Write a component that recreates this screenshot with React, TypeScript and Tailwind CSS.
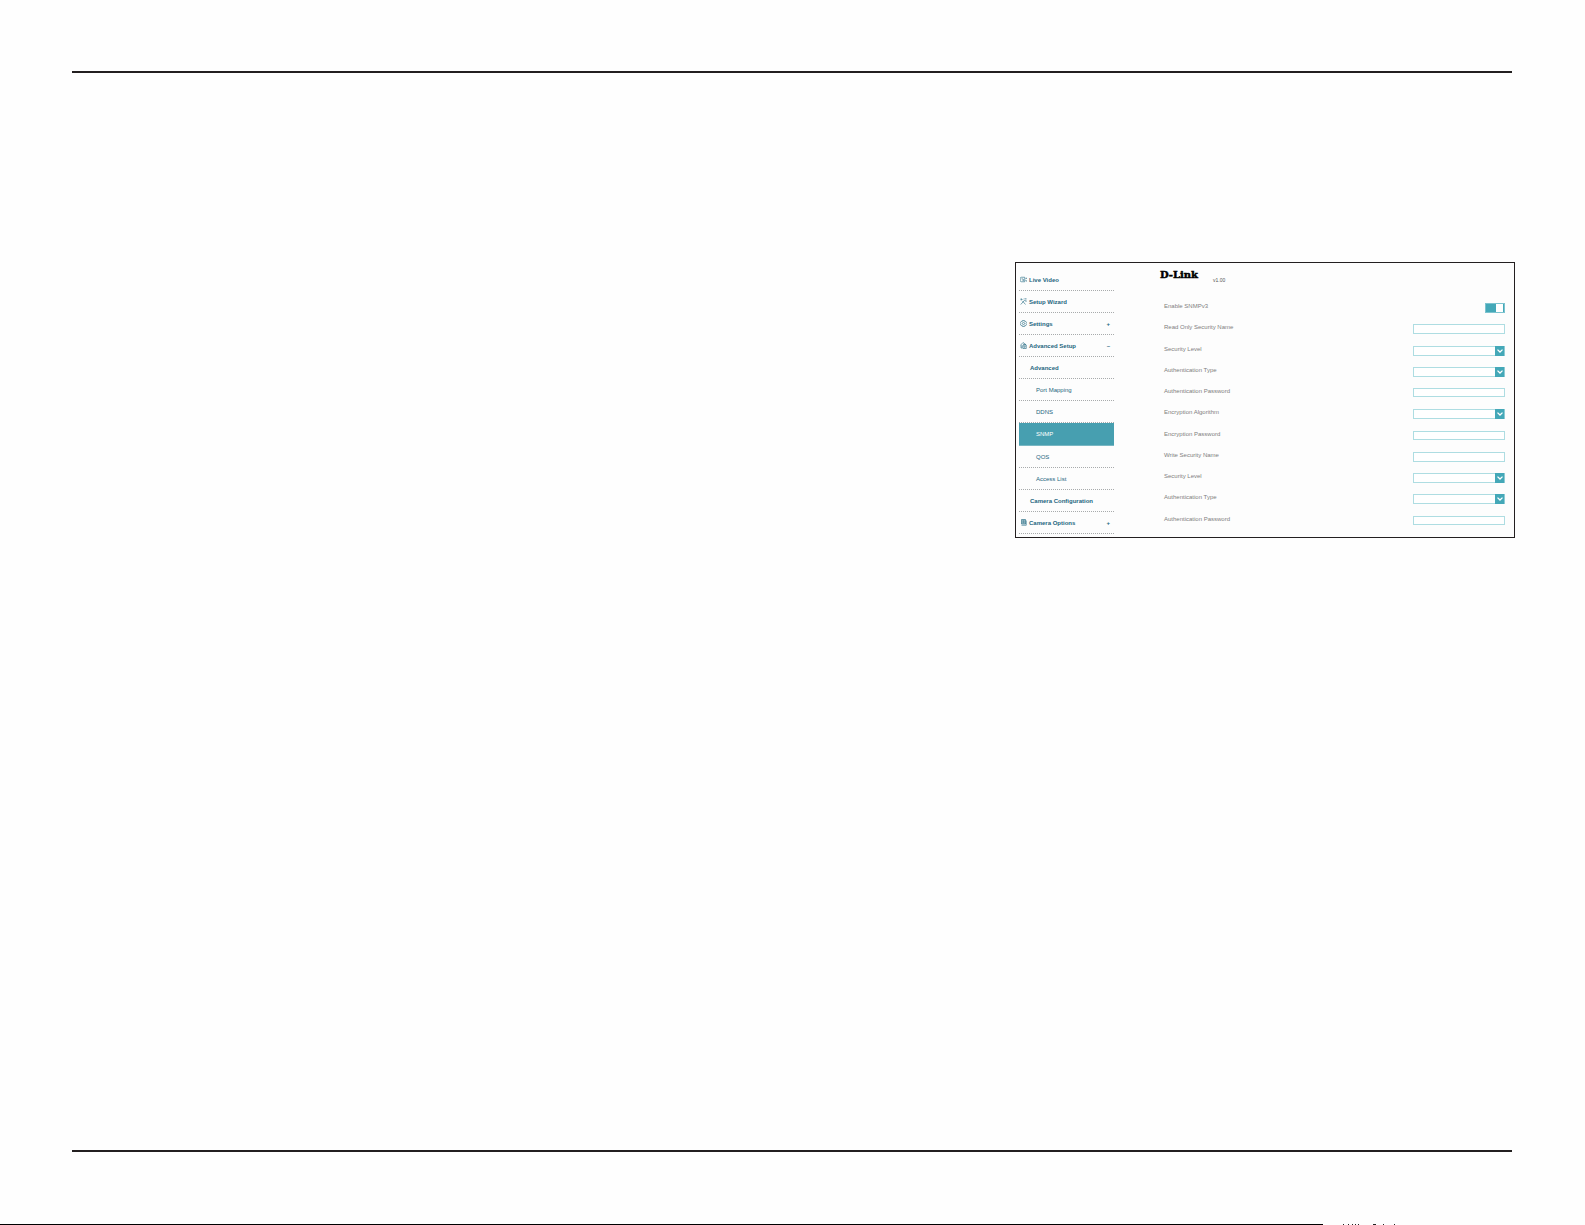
import { useState } from 'react';

type FieldType = 'toggle' | 'text' | 'password' | 'select';

interface Field {
  id: string;
  label: string;
  type: FieldType;
}

interface NavItem {
  label: string;
  level: 0 | 1 | 2;
  icon?: 'video' | 'wizard' | 'settings' | 'advanced' | 'options';
  mark?: string;
  active?: boolean;
}

const navItems: NavItem[] = [
  { label: 'Live Video', level: 0, icon: 'video' },
  { label: 'Setup Wizard', level: 0, icon: 'wizard' },
  { label: 'Settings', level: 0, icon: 'settings', mark: '+' },
  { label: 'Advanced Setup', level: 0, icon: 'advanced', mark: '–' },
  { label: 'Advanced', level: 1 },
  { label: 'Port Mapping', level: 2 },
  { label: 'DDNS', level: 2 },
  { label: 'SNMP', level: 2, active: true },
  { label: 'QOS', level: 2 },
  { label: 'Access List', level: 2 },
  { label: 'Camera Configuration', level: 1 },
  { label: 'Camera Options', level: 0, icon: 'options', mark: '+' },
];

const fields: Field[] = [
  { id: 'enable', label: 'Enable SNMPv3', type: 'toggle' },
  { id: 'read-name', label: 'Read Only Security Name', type: 'text' },
  { id: 'read-level', label: 'Security Level', type: 'select' },
  { id: 'read-auth', label: 'Authentication Type', type: 'select' },
  { id: 'read-auth-password', label: 'Authentication Password', type: 'password' },
  { id: 'read-algorithm', label: 'Encryption Algorithm', type: 'select' },
  { id: 'read-password', label: 'Encryption Password', type: 'password' },
  { id: 'write-name', label: 'Write Security Name', type: 'text' },
  { id: 'write-level', label: 'Security Level', type: 'select' },
  { id: 'write-auth', label: 'Authentication Type', type: 'select' },
  { id: 'write-auth-password', label: 'Authentication Password', type: 'password' },
];

const NavIcon = ({ name }: { name: NavItem['icon'] }) => (
  <svg viewBox="0 0 14 14" className="size-[7px] shrink-0" fill="none" stroke="currentColor" strokeWidth="1.2" aria-hidden="true">
    {name === 'video' && (
      <>
        <path d="M9.5 2.500H3a2.500 2.500 0 0 0-2.500 2.500v4A2.500 2.500 0 0 0 3 11.500h6.500z" />
        <path d="M3 5.500h2.500M11 5l2.500-1v2M11 9l2.500 1.500V8.500" />
        <circle cx="6.500" cy="8" r="1.200" />
      </>
    )}
    {name === 'wizard' && (
      <>
        <path d="M1.500 13 9 4.500M5 6l6 7M1 2.500h3M2.500 1v4M5 3.500l2-2" />
        <path d="M9 1.500h4M9 4.500h4M11 7h2" />
      </>
    )}
    {name === 'settings' && (
      <>
        <path d="M5 1h4l.5 2 2-.3 1.800 3L12 7l1.300 1.300-1.800 3-2-.3L9 13H5l-.5-2-2 .3-1.800-3L2 7 .7 5.700l1.800-3 2 .3z" />
        <circle cx="7" cy="7" r="2.200" />
      </>
    )}
    {name === 'advanced' && (
      <>
        <path d="M1 6.500 6 1l5 4M2 6v6h3M6 6h6.500v7H6zM7.500 6V4.500h3.500V6" />
        <circle cx="9.300" cy="9.500" r="1.300" />
        <path d="M3 8h2M3 10h2" />
      </>
    )}
    {name === 'options' && (
      <>
        <path d="M3 1h8v9H3z" fill="currentColor" fillOpacity=".35" />
        <path d="M3 12.500h9.500V3M5 3.500h4M5 5.500h4M5 7.500h4" />
      </>
    )}
  </svg>
);

const Sidebar = () => (
  <nav className="w-[95px] shrink-0 ml-[3px] pb-[3px]">
    <ul>
      {navItems.map((item, index) => (
        <li
          key={item.label}
          className={`border-b ${index === 0 ? 'h-7 pt-[6px]' : item.active ? 'h-[23px]' : 'h-[22px]'} ${
            item.active
              ? 'border-solid border-[#79b7c3] bg-[#479fb0] text-white'
              : 'border-dotted border-[#a8abac] text-[#1d6680]'
          }`}
        >
          <a
            href="#"
            className={`flex h-full items-center gap-[2px] ${item.level === 0 ? 'pl-px' : item.level === 1 ? 'pl-[11px]' : 'pl-[17px]'} ${
              item.level === 2 ? '' : 'font-bold'
            }`}
          >
            {item.icon && <NavIcon name={item.icon} />}
            <span>{item.label}</span>
            {item.mark && <span className="ml-auto mr-1">{item.mark}</span>}
          </a>
        </li>
      ))}
    </ul>
  </nav>
);

const SelectBox = ({ id }: { id: string }) => (
  <div className="relative h-[10px] w-[92px]">
    <select id={id} className="block size-full appearance-none border border-[#aedde2] bg-white" defaultValue="">
      <option value=""></option>
    </select>
    <span className="pointer-events-none absolute inset-y-0 right-0 flex w-[10px] items-center justify-center border-r border-[#8ecbd4] bg-[#44a8b8]">
      <svg viewBox="0 0 6 4" className="h-1 w-[6px]" fill="none" stroke="#fff" strokeWidth="1.3" aria-hidden="true">
        <path d="M.5.6 3 3 5.5.6" />
      </svg>
    </span>
  </div>
);

const Toggle = ({ id }: { id: string }) => {
  const [enabled, setEnabled] = useState(true);

  return (
    <div className="relative h-[10px] w-5">
      <input
        id={id}
        type="checkbox"
        checked={enabled}
        onChange={(e) => setEnabled(e.target.checked)}
        className="block size-full appearance-none border border-[#7cc3cf] bg-[#44a8b8]"
      />
      <span className={`pointer-events-none absolute inset-y-px w-[7px] bg-white ${enabled ? 'right-[2px]' : 'left-[2px]'}`} />
    </div>
  );
};

const FieldControl = ({ field }: { field: Field }) => {
  if (field.type === 'toggle') return <Toggle id={field.id} />;
  if (field.type === 'select') return <SelectBox id={field.id} />;
  return (
    <input
      id={field.id}
      type={field.type}
      className={`block w-[92px] border border-[#aedde2] bg-white px-1 ${field.type === 'password' ? 'h-[9px]' : 'h-[10px]'}`}
    />
  );
};

const App = () => {
  return (
    <div className="flex min-h-screen flex-col bg-[#fefefe] font-['Liberation_Sans',Arial,sans-serif] text-[6px] leading-[8px]">
      <main className="ml-[72px] mr-[73px] mt-[71px] flex flex-1 flex-col">
        <hr className="border-t-2 border-[#231f20]" />

        <section className="-mr-[3px] ml-auto mt-[189px] flex w-full max-w-[500px] border border-[#231f20] bg-[#fdfdfd]">
          <Sidebar />

          <div className="flex min-w-0 flex-1 flex-col pl-[46px] pr-[9px]">
            <header className="flex h-10 items-start gap-[15px] pt-[6px]">
              <span className="font-['DejaVu_Serif',serif] text-[10px] leading-[12px] font-bold text-black [-webkit-text-stroke:0.5px_black]">
                D-Link
              </span>
              <span className="pt-[7px] text-[5px] text-[#555]">v1.00</span>
            </header>

            <form className="flex flex-1 flex-col pl-1">
              {fields.map((field) => (
                <div key={field.id} className="flex flex-1 items-start justify-between">
                  <label htmlFor={field.id} className="leading-[7px] text-[#808080]">
                    {field.label}
                  </label>
                  <FieldControl field={field} />
                </div>
              ))}
            </form>
          </div>
        </section>

        <hr className="mb-[72px] mt-auto border-t-2 border-[#231f20]" />
      </main>

      {/* Page edge */}
      <footer className="flex h-px items-end">
        <div className="h-px w-[83.5%] bg-black" />
        <svg viewBox="0 0 55 1" className="ml-5 h-px w-[55px]" fill="#222" aria-hidden="true">
          <path d="M0 0h1v1H0zM5 0h1v1H5zM9 0h1v1H9zM12 0h1v1h-1zM15 0h1v1h-1zM30 0h3v1h-3zM40 0h1v1h-1zM51 0h1v1h-1z" />
        </svg>
      </footer>
    </div>
  );
};

export default App;
